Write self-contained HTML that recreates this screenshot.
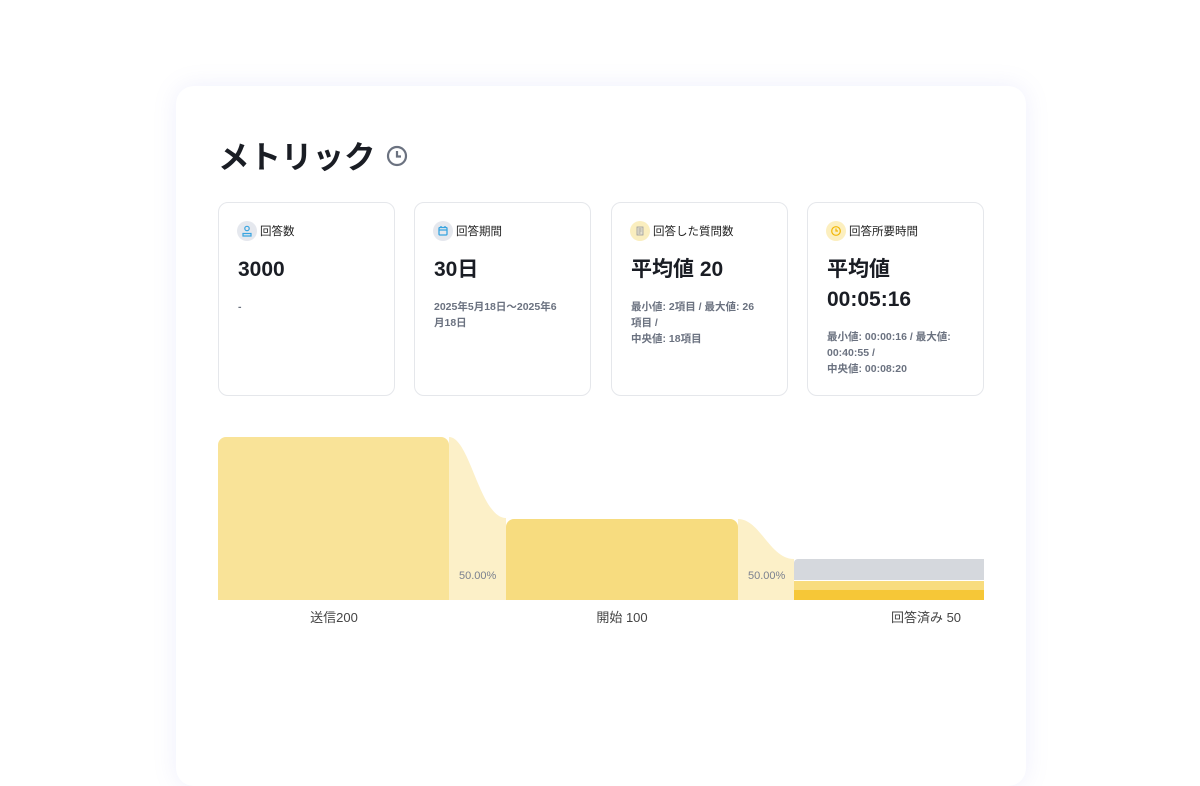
<!DOCTYPE html>
<html><head><meta charset="utf-8"><style>
*{margin:0;padding:0;box-sizing:border-box}
body{width:1200px;height:736px;background:#fff;font-family:"Liberation Sans","Noto Sans CJK JP",sans-serif;position:relative;overflow:hidden;color:#1a1d24}
.card{position:absolute;left:176px;top:86px;width:850px;height:700px;background:#fff;border-radius:18px;box-shadow:0 0 24px rgba(120,130,230,0.13)}
h1{position:absolute;left:218px;top:135px;font-size:31.5px;font-weight:700;color:#1a1d24;line-height:44px}
.clk{position:absolute;left:386px;top:145px}
.s{position:absolute;top:202px;width:177px;height:194px;border:1px solid #e5e7eb;border-radius:10px;background:#fff}
.hd{position:absolute;left:18px;top:18px;display:flex;align-items:center;font-size:11.5px;color:#222}
.ic{width:20px;height:20px;border-radius:50%;margin-right:3px;display:flex;align-items:center;justify-content:center}
.v{position:absolute;left:19px;top:52px;font-size:21px;font-weight:700;line-height:30px;color:#1a1d24}
.d{position:absolute;left:19px;font-size:10.5px;font-weight:700;color:#6b7280;line-height:16px;width:133px}
.lbl{position:absolute;top:607px;font-size:13px;color:#444;transform:translateX(-50%)}
.pct{position:absolute;top:570px;font-size:11px;color:#7b8190}
</style></head><body>
<div class="card"></div>
<h1>メトリック</h1>
<svg class="clk" width="22" height="22" viewBox="0 0 22 22"><circle cx="11" cy="11" r="9" fill="none" stroke="#6b7280" stroke-width="2.2"/><path d="M11 6v5.5h4" fill="none" stroke="#6b7280" stroke-width="2.2"/></svg>

<div class="s" style="left:218px"><div class="hd"><div class="ic" style="background:#e5e8ee"><svg width="12" height="12" viewBox="0 0 12 12"><circle cx="6" cy="3.5" r="2.2" fill="none" stroke="#38a4e0" stroke-width="1.2"/><path d="M2 11v-2.5h8V11z" fill="none" stroke="#38a4e0" stroke-width="1.2"/></svg></div>回答数</div><div class="v">3000</div><div class="d" style="top:96px">-</div></div>

<div class="s" style="left:414px"><div class="hd"><div class="ic" style="background:#e5e8ee"><svg width="12" height="12" viewBox="0 0 12 12"><rect x="2" y="2.5" width="8" height="7.5" rx="1" fill="none" stroke="#38a4e0" stroke-width="1.3"/><path d="M2 5h8M4 1v2M8 1v2" stroke="#38a4e0" stroke-width="1.3"/></svg></div>回答期間</div><div class="v">30日</div><div class="d" style="top:96px">2025年5月18日〜2025年6<br>月18日</div></div>

<div class="s" style="left:611px"><div class="hd"><div class="ic" style="background:#faeebf"><svg width="12" height="12" viewBox="0 0 12 12"><rect x="3" y="2" width="6" height="8" fill="#e7e2cf" stroke="#9a9a9a" stroke-width="0.8"/><path d="M4.5 4h3M4.5 6h3M4.5 8h2" stroke="#888" stroke-width="0.7"/></svg></div>回答した質問数</div><div class="v">平均値 20</div><div class="d" style="top:96px;width:150px">最小値: 2項目 / 最大値: 26<br>項目 /<br>中央値: 18項目</div></div>

<div class="s" style="left:807px"><div class="hd"><div class="ic" style="background:#fcefbf"><svg width="12" height="12" viewBox="0 0 12 12"><circle cx="6" cy="6" r="4.3" fill="none" stroke="#f2b705" stroke-width="1.2"/><path d="M6 3.5V6h2" fill="none" stroke="#f2b705" stroke-width="1.2"/></svg></div>回答所要時間</div><div class="v">平均値<br>00:05:16</div><div class="d" style="top:126px;width:150px">最小値: 00:00:16 / 最大値:<br>00:40:55 /<br>中央値: 00:08:20</div></div>

<svg style="position:absolute;left:0;top:0" width="1200" height="736">
<path d="M449 437 C470 437 480 518 506 518 L506 600 L449 600Z" fill="#fcf0c8"/>
<path d="M738 519 C760 519 770 559 794 559 L794 600 L738 600Z" fill="#fcf0c8"/>
<path d="M218 600V445a8 8 0 0 1 8-8h215a8 8 0 0 1 8 8V600Z" fill="#f9e398"/>
<path d="M506 600V527a8 8 0 0 1 8-8h216a8 8 0 0 1 8 8V600Z" fill="#f7dc7f"/>
<path d="M794 580V563a4 4 0 0 1 4-4h186v21Z" fill="#d5d8dd"/>
<rect x="794" y="581" width="190" height="9" fill="#f8dc7e"/>
<rect x="794" y="590" width="190" height="10" fill="#f6c737"/>
</svg>
<div class="pct" style="left:459px">50.00%</div>
<div class="pct" style="left:748px">50.00%</div>
<div class="lbl" style="left:334px">送信200</div>
<div class="lbl" style="left:622px">開始 100</div>
<div class="lbl" style="left:926px">回答済み 50</div>
</body></html>
